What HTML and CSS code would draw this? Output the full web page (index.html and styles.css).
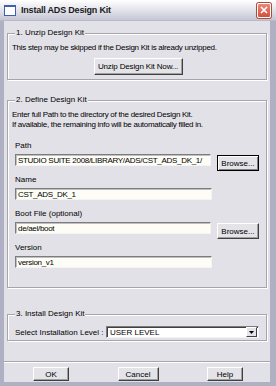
FILE: index.html
```html
<!DOCTYPE html>
<html>
<head>
<meta name="viewport" content="width=device-width, initial-scale=1">
<link rel="stylesheet" href="styles.css">
</head>
<body>

<div class="window">
  <div class="titlebar">
    <span class="app-icon"></span>
    <span class="title">Install ADS Design Kit</span>
    <span class="close-btn">
      <svg width="8" height="8" viewBox="0 0 8 8"><path d="M1 1 L7 7 M7 1 L1 7" stroke="#fff" stroke-width="1.6"/></svg>
    </span>
  </div>

  <div class="client">
    <fieldset class="group group-unzip">
      <legend>1. Unzip Design Kit</legend>
      <p class="note">This step may be skipped if the Design Kit is already unzipped.</p>
      <div class="center">
        <button type="button" class="btn btn-unzip">Unzip Design Kit Now...</button>
      </div>
    </fieldset>

    <fieldset class="group group-define">
      <legend>2. Define Design Kit</legend>
      <p class="note">Enter full Path to the directory of the desired Design Kit.<br>If available, the remaining info will be automatically filled in.</p>

      <div class="field">
        <label for="path">Path</label>
        <div class="row">
          <input type="text" id="path" class="textbox" value="STUDIO SUITE 2008/LIBRARY/ADS/CST_ADS_DK_1/">
          <button type="button" class="btn btn-browse btn-default">Browse...</button>
        </div>
      </div>

      <div class="field">
        <label for="name">Name</label>
        <div class="row">
          <input type="text" id="name" class="textbox" value="CST_ADS_DK_1">
        </div>
      </div>

      <div class="field">
        <label for="boot">Boot File (optional)</label>
        <div class="row">
          <input type="text" id="boot" class="textbox" value="de/ael/boot">
          <button type="button" class="btn btn-browse">Browse...</button>
        </div>
      </div>

      <div class="field">
        <label for="version">Version</label>
        <div class="row">
          <input type="text" id="version" class="textbox" value="version_v1">
        </div>
      </div>
    </fieldset>

    <fieldset class="group group-install">
      <legend>3. Install Design Kit</legend>
      <div class="level-row">
        <label>Select Installation Level :</label>
        <div class="combo">
          <span class="combo-text">USER LEVEL</span>
          <span class="combo-drop"><svg width="5" height="3" viewBox="0 0 5 3"><path d="M0 0 H5 L2.5 3 Z" fill="#000"/></svg></span>
        </div>
      </div>
    </fieldset>

    <div class="separator"></div>

    <div class="actions">
      <button type="button" class="btn btn-action">OK</button>
      <button type="button" class="btn btn-action">Cancel</button>
      <button type="button" class="btn btn-action">Help</button>
    </div>
  </div>
</div>

</body>
</html>
```

FILE: styles.css
```css
body {
    margin: 0;
    font-family: "Liberation Sans", Arial, sans-serif;
    font-size: 8px;
    color: #000;
}

/* Outer window */
.window {
    width: 276px;
    height: 386px;
    display: flex;
    flex-direction: column;
    background-color: #b0b0c4;
}

/* Title bar */
.titlebar {
    height: 21px;
    display: flex;
    align-items: center;
    padding: 0 5px 0 4px;
    box-sizing: border-box;
    background: linear-gradient(#ffffff 0%, #eeeef4 30%, #d8d8e2 70%, #c6c6d4 100%);
    border-bottom: 1px solid #b8b8c8;
}

.app-icon {
    width: 10px;
    height: 8px;
    border: 1px solid #3c5fb0;
    border-top-width: 2px;
    background-color: #fff;
    margin-right: 5px;
}

.title {
    flex: 1;
    font-weight: bold;
    font-size: 9px;
    letter-spacing: -0.2px;
    color: #1a1a1a;
}

.close-btn {
    width: 12px;
    height: 13px;
    display: flex;
    align-items: center;
    justify-content: center;
    border: 1px solid #fff;
    border-radius: 2px;
    background: linear-gradient(#e88a7a, #d0503c);
    box-shadow: 0 0 0 1px #b04838;
}

/* Client area */
.client {
    flex: 1;
    margin: 0 6px 4px 4px;
    padding: 0 3px 0 3px;
    background-color: #e2e1e7;
    display: flex;
    flex-direction: column;
}

/* Group boxes */
.group {
    margin: 0;
    padding: 0 7px;
    border: 1px solid #a6a5ab;
    box-shadow: inset 1px 1px 0 #fff, 1px 1px 0 #fff;
    min-width: 0;
}

.group legend {
    padding: 0 1px;
    margin-left: 0;
    line-height: 10px;
    background-color: #e2e1e7;
}

.group-unzip {
    margin-top: 7px;
    padding-top: 5px;
    padding-bottom: 4px;
}

.group-define {
    margin-top: 15px;
    padding-top: 5px;
    padding-bottom: 19px;
}

.group-install {
    margin-top: 21px;
    padding-top: 7px;
    padding-bottom: 2px;
}

.note {
    margin: 0;
    line-height: 10px;
    margin-left: -3px;
    letter-spacing: -0.28px;
}

.center {
    text-align: center;
    margin-top: 5px;
}

/* Buttons */
.btn {
    font-family: "Liberation Sans", Arial, sans-serif;
    font-size: 8px;
    color: #000;
    background-color: #e4e3e8;
    border: 1px solid;
    border-color: #fff #404040 #404040 #fff;
    box-shadow: inset -1px -1px 0 #a0a0a0;
    padding: 0;
    margin: 0;
    cursor: pointer;
}

.btn-unzip {
    width: 89px;
    height: 17px;
    margin-left: 2px;
    letter-spacing: -0.15px;
}

.btn-browse {
    width: 42px;
    height: 16px;
    margin: 1px 0 0 6px;
    flex: none;
}

.btn-default {
    border-color: #000;
    box-shadow: inset 1px 1px 0 #fff, inset -1px -1px 0 #808080;
}

/* Form fields */
.field {
    margin-top: 9px;
}

.field:first-of-type {
    margin-top: 11px;
}

.field label {
    display: block;
    line-height: 10px;
    margin-bottom: 3px;
}

.row {
    display: flex;
    align-items: flex-start;
    height: 12px;
}

.textbox {
    width: 197px;
    height: 12px;
    box-sizing: border-box;
    margin: 0;
    padding: 0 0 0 2px;
    font-family: "Liberation Sans", Arial, sans-serif;
    font-size: 8px;
    letter-spacing: -0.3px;
    color: #000;
    background-color: #fdfdf6;
    border: 1px solid;
    border-color: #7c7c7c #f4f4f4 #f4f4f4 #7c7c7c;
    box-shadow: inset 1px 1px 0 #c0c0c0;
    outline: none;
}

/* Installation level */
.level-row {
    display: flex;
    align-items: center;
    height: 12px;
}

.level-row label {
    width: 91px;
    flex: none;
}

.combo {
    width: 156px;
    height: 12px;
    box-sizing: border-box;
    display: flex;
    align-items: center;
    background-color: #fff;
    border: 1px solid;
    border-color: #7c7c7c #f4f4f4 #f4f4f4 #7c7c7c;
    box-shadow: inset 1px 1px 0 #404040;
}

.combo-text {
    flex: 1;
    padding-left: 3px;
    font-size: 8px;
}

.combo-drop {
    width: 9px;
    height: 8px;
    margin-right: 1px;
    display: flex;
    align-items: center;
    justify-content: center;
    background-color: #e4e3e8;
    border: 1px solid;
    border-color: #fff #404040 #404040 #fff;
}

/* Bottom buttons */
.separator {
    margin: 20px -3px 0 -3px;
    border-top: 1px solid #a6a5ab;
    border-bottom: 1px solid #fff;
}

.actions {
    display: flex;
    justify-content: space-between;
    padding: 0 24px 0 26px;
    margin-top: 4px;
}

.btn-action {
    width: 36px;
    height: 14px;
}

.btn-action:nth-child(2) {
    width: 41px;
}
```
